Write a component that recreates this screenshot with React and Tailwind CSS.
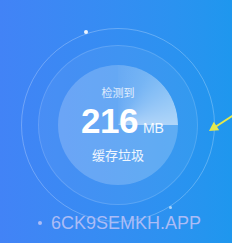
import React from "react";

const Arrow = () => (
  <svg className="absolute left-[200px] top-[105px]" width="32" height="32" viewBox="0 0 32 32">
    <line x1="33" y1="10.5" x2="16" y2="21.5" stroke="#e4e84c" strokeWidth="2" />
    <polygon points="9,26 13.8,16.8 19.2,25.2" fill="#e4e84c" />
  </svg>
);

export default function App() {
  return (
    <div
      className="relative w-[232px] h-[243px] overflow-hidden bg-gradient-to-r from-[#4283f6] to-[#1e97ee]"
      style={{ fontFamily: '"Liberation Sans", "Noto Sans CJK SC", sans-serif' }}
    >
      <div className="pt-[28px] pl-[21px]">
        {/* outer ring */}
        <div className="w-[194px] h-[194px] rounded-full border border-white/25 flex items-center justify-center">
          {/* middle ring */}
          <div className="w-[160px] h-[160px] rounded-full border border-white/15 bg-white/[0.06] flex items-center justify-center">
            {/* inner disk */}
            <div className="relative w-[120px] h-[120px] rounded-full bg-white/20 overflow-hidden">
              <div className="absolute inset-0 rounded-full bg-[conic-gradient(from_0deg,rgba(255,255,255,0.02)_0deg,rgba(255,255,255,0.12)_30deg,rgba(255,255,255,0.5)_90deg,rgba(255,255,255,0)_90deg)]" />
              <div className="relative flex flex-col items-center pt-[21px] text-white">
                <span className="text-[11px] leading-[14px] text-white/80">检测到</span>
                <div className="flex items-baseline mt-[4px] ml-[9px]">
                  <span className="text-[35px] leading-[34px] font-bold tracking-[-0.5px]">216</span>
                  <span className="text-[14px] leading-[14px] ml-[5px] text-white/90">MB</span>
                </div>
                <span className="text-[13px] leading-[16px] mt-[10px] text-white/90">缓存垃圾</span>
              </div>
            </div>
          </div>
        </div>
      </div>

      <span className="absolute left-[84px] top-[30px] w-[4px] h-[4px] rounded-full bg-white/90" />
      <span className="absolute left-[169px] top-[206px] w-[3px] h-[3px] rounded-full bg-white/60" />

      <Arrow />

      <div className="absolute left-[38px] top-[212px] flex items-center text-[#abbcf6]">
        <span className="w-[4px] h-[4px] rounded-full bg-[#abbcf6]" />
        <span className="ml-[9px] text-[18px] leading-[22px]">6CK9SEMKH.APP</span>
      </div>
    </div>
  );
}
